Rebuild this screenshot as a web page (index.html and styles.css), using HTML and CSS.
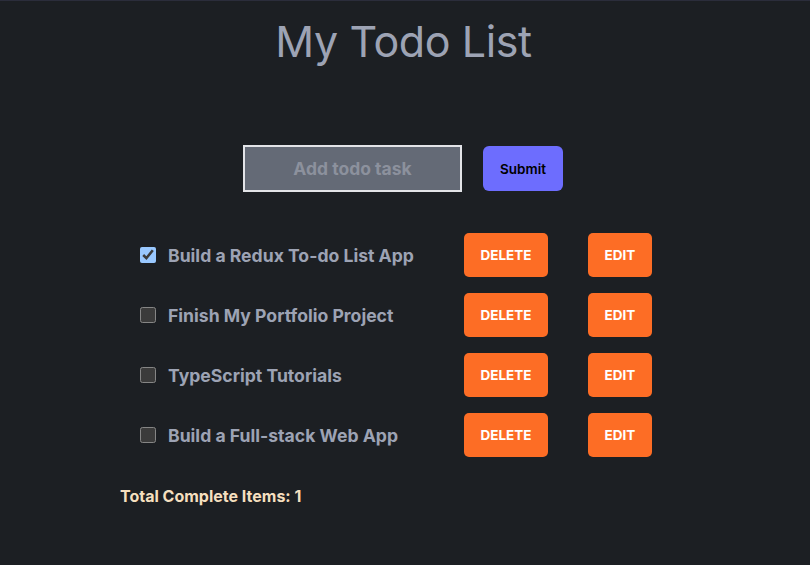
FILE: index.html
```html
<!DOCTYPE html>
<html>
<head>
<meta charset="utf-8">
<link rel="stylesheet" href="styles.css">
</head>
<body>
<div class="app">
  <h1 class="title">My Todo List</h1>
  <form class="add-form">
    <input class="add-input" type="text" placeholder="Add todo task">
    <button class="submit-btn" type="button">Submit</button>
  </form>
  <ul class="todo-list">
    <li class="todo-row">
      <input class="todo-check" type="checkbox" checked>
      <span class="todo-text">Build a Redux To-do List App</span>
      <button class="action-btn delete-btn">DELETE</button>
      <button class="action-btn edit-btn">EDIT</button>
    </li>
    <li class="todo-row">
      <input class="todo-check" type="checkbox">
      <span class="todo-text">Finish My Portfolio Project</span>
      <button class="action-btn delete-btn">DELETE</button>
      <button class="action-btn edit-btn">EDIT</button>
    </li>
    <li class="todo-row">
      <input class="todo-check" type="checkbox">
      <span class="todo-text">TypeScript Tutorials</span>
      <button class="action-btn delete-btn">DELETE</button>
      <button class="action-btn edit-btn">EDIT</button>
    </li>
    <li class="todo-row">
      <input class="todo-check" type="checkbox">
      <span class="todo-text">Build a Full-stack Web App</span>
      <button class="action-btn delete-btn">DELETE</button>
      <button class="action-btn edit-btn">EDIT</button>
    </li>
  </ul>
  <p class="total">Total Complete Items: 1</p>
</div>
</body>
</html>
```
FILE: styles.css
```css
html, body {
  margin: 0;
  padding: 0;
  background: #1c1f23;
  height: 100%;
}
body {
  border-top: 1px solid #2b2d3b;
  box-sizing: border-box;
  font-family: Inter, "Noto Sans", sans-serif;
}
.app {
  display: flex;
  flex-direction: column;
}
.title {
  margin: 14px 0 0;
  text-align: center;
  font-size: 43px;
  font-weight: 400;
  color: #9da3b4;
  letter-spacing: -0.4px;
  line-height: 52px;
  padding-right: 3px;
}
.add-form {
  display: flex;
  justify-content: center;
  align-items: center;
  gap: 21px;
  margin: 78px 4px 0 0;
}
.add-input {
  width: 219px;
  height: 47px;
  box-sizing: border-box;
  border: 2px solid #e3e4e8;
  background: #646a76;
  text-align: center;
  font-family: Inter, sans-serif;
  font-size: 17.5px;
  font-weight: 700;
  color: #8c919d;
  outline: none;
}
.add-input::placeholder {
  color: #8c919d;
}
.submit-btn {
  width: 80px;
  height: 45px;
  border: none;
  border-radius: 6px;
  background: #6d6dfe;
  color: #000;
  font-family: Inter, sans-serif;
  font-size: 13.5px;
  font-weight: 600;
}
.todo-list {
  list-style: none;
  margin: 41px 0 0 140px;
  padding: 0;
  display: flex;
  flex-direction: column;
  gap: 16px;
}
.todo-row {
  display: flex;
  align-items: center;
  height: 44px;
}
.todo-check {
  width: 16px;
  height: 16px;
  margin: 0 12px 0 0;
  color-scheme: dark;
}
.todo-text {
  width: 296px;
  font-size: 17.6px;
  font-weight: 700;
  color: #9da3b4;
}
.action-btn {
  height: 44px;
  border: none;
  border-radius: 5px;
  background: #fd6d25;
  color: #fff;
  font-family: Inter, sans-serif;
  font-size: 13.5px;
  font-weight: 700;
}
.delete-btn {
  width: 84px;
}
.edit-btn {
  width: 64px;
  margin-left: 40px;
}
.total {
  margin: 29px 0 0 120px;
  font-size: 16px;
  font-weight: 700;
  color: #f5dfbf;
}
```
